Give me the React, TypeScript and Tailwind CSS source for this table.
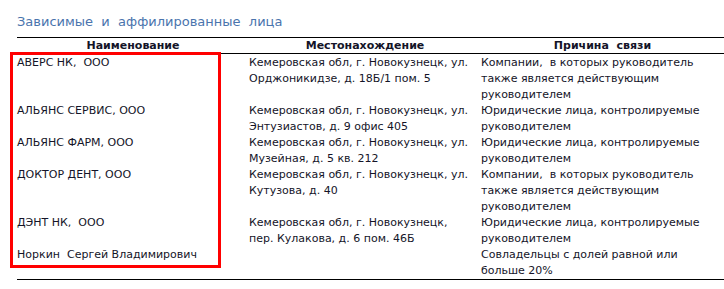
const rows = [
  {
    name: "АВЕРС НК,  ООО",
    address: ["Кемеровская обл, г. Новокузнецк, ул.", "Орджоникидзе, д. 18Б/1 пом. 5"],
    reason: ["Компании,  в которых руководитель", "также является действующим", "руководителем"],
  },
  {
    name: "АЛЬЯНС СЕРВИС, ООО",
    address: ["Кемеровская обл, г. Новокузнецк, ул.", "Энтузиастов, д. 9 офис 405"],
    reason: ["Юридические лица, контролируемые", "руководителем"],
  },
  {
    name: "АЛЬЯНС ФАРМ, ООО",
    address: ["Кемеровская обл, г. Новокузнецк, ул.", "Музейная, д. 5 кв. 212"],
    reason: ["Юридические лица, контролируемые", "руководителем"],
  },
  {
    name: "ДОКТОР ДЕНТ, ООО",
    address: ["Кемеровская обл, г. Новокузнецк, ул.", "Кутузова, д. 40"],
    reason: ["Компании,  в которых руководитель", "также является действующим", "руководителем"],
  },
  {
    name: "ДЭНТ НК,  ООО",
    address: ["Кемеровская обл, г. Новокузнецк,", "пер. Кулакова, д. 6 пом. 46Б"],
    reason: ["Юридические лица, контролируемые", "руководителем"],
  },
  {
    name: "Норкин  Сергей Владимирович",
    address: [],
    reason: ["Совладельцы с долей равной или", "больше 20%"],
  },
];

function Lines({ items }: { items: string[] }) {
  return (
    <>
      {items.map((l, i) => (
        <div key={i} className="whitespace-pre">
          {l}
        </div>
      ))}
    </>
  );
}

export default function App() {
  return (
    <div
      className="relative w-[724px] h-[289px] bg-white text-[#141428] text-[11px] leading-[16px]"
      style={{ fontFamily: "Tahoma, 'DejaVu Sans', sans-serif" }}
    >
      <div className="pl-[17px] pt-[12px]">
        <div className="text-[13px] leading-[20px] text-[#4a74ad] whitespace-pre">
          Зависимые  и  аффилированные  лица
        </div>
        <div className="mt-[5px] border-t border-black">
          <div className="grid grid-cols-[232px_232px_1fr] font-bold border-b border-black h-[16px]">
            <div className="text-center">Наименование</div>
            <div className="text-center">Местонахождение</div>
            <div className="text-center whitespace-pre">Причина  связи</div>
          </div>
          <div className="pt-[1px] border-b border-black">
            {rows.map((r, i) => (
              <div key={i} className="grid grid-cols-[232px_232px_1fr]">
                <div className="whitespace-pre">{r.name}</div>
                <div>
                  <Lines items={r.address} />
                </div>
                <div>
                  <Lines items={r.reason} />
                </div>
              </div>
            ))}
          </div>
        </div>
      </div>
      <div className="absolute left-[10px] top-[52px] w-[211px] h-[216px] border-[3px] border-[#ff0000]" />
    </div>
  );
}
